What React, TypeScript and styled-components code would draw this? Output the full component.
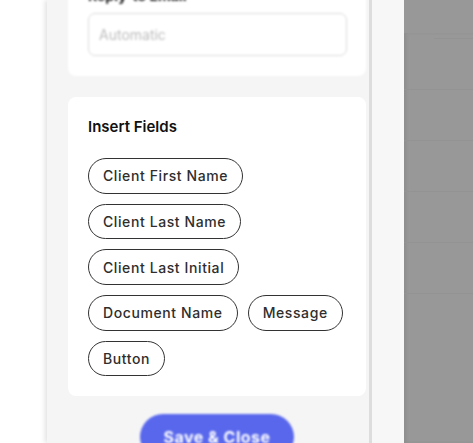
import React, { useLayoutEffect, useRef } from 'react'
import styled, { createGlobalStyle } from 'styled-components'

const GlobalStyle = createGlobalStyle`
  html, body {
    margin: 0;
    padding: 0;
    background: #ffffff;
    font-family: Inter, "Liberation Sans", sans-serif;
  }
  * { box-sizing: border-box; }
`

const fields = [
  ['Client First Name'],
  ['Client Last Name'],
  ['Client Last Initial'],
  ['Document Name', 'Message'],
  ['Button'],
]

const App: React.FC = () => {
  const drawerRef = useRef<HTMLDivElement>(null)

  useLayoutEffect(() => {
    if (drawerRef.current) drawerRef.current.scrollTop = 54
  }, [])

  return (
    <>
      <GlobalStyle />
      <Page>
        <Drawer ref={drawerRef}>
          <Card $blurred>
            <Label>Reply-to Email</Label>
            <Input placeholder="Automatic" readOnly />
          </Card>
          <Card>
            <Title>Insert Fields</Title>
            <PillList>
              {fields.map((row, i) => (
                <PillRow key={i}>
                  {row.map(name => (
                    <Pill key={name}>{name}</Pill>
                  ))}
                </PillRow>
              ))}
            </PillList>
          </Card>
          <Footer>
            <SaveButton>Save &amp; Close</SaveButton>
          </Footer>
        </Drawer>
        <Gutter />
        <Overlay>
          <OverlayTop />
          <OverlayBody>
            {[0, 1, 2, 3, 4, 5].map(i => (
              <OverlayRow key={i} $first={i === 0} />
            ))}
          </OverlayBody>
        </Overlay>
      </Page>
    </>
  )
}

const Page = styled.div`
  display: flex;
  height: 100vh;
  padding-left: 47px;
  overflow: hidden;
`
const Drawer = styled.div`
  width: 325px;
  flex-shrink: 0;
  height: 100%;
  overflow: hidden;
  background: #f5f5f5;
  padding: 21px 3px 40px 21px;
  display: flex;
  flex-direction: column;
  gap: 21px;
  box-shadow: -2px 0 5px rgba(0, 0, 0, 0.12);
  border-right: 3px solid #dddddd;
`
const Card = styled.div<{ $blurred?: boolean }>`
  flex-shrink: 0;
  width: 298px;
  background: #ffffff;
  border-radius: 8px;
  padding: 20px 19px 20px 20px;
  filter: ${p => (p.$blurred ? 'blur(1px)' : 'none')};
`
const Label = styled.div`
  font-size: 14px;
  line-height: 18px;
  font-weight: 700;
  color: #222;
  margin-bottom: 8px;
`
const Input = styled.input`
  display: block;
  width: 100%;
  height: 43px;
  border: 1px solid #dcdcdc;
  border-radius: 7px;
  padding: 0 10px;
  font-family: inherit;
  font-size: 14px;
  color: #333;
  outline: none;
  &::placeholder { color: #bdbdbd; }
`
const Title = styled.div`
  font-size: 15px;
  line-height: 20px;
  font-weight: 600;
  color: #111;
  margin-bottom: 21px;
`
const PillList = styled.div`
  display: flex;
  flex-direction: column;
  gap: 10px;
`
const PillRow = styled.div`
  display: flex;
  gap: 10px;
`
const Pill = styled.button`
  height: 35.7px;
  padding: 0 14px;
  border: 1px solid #333;
  border-radius: 18px;
  background: #fff;
  font-family: inherit;
  font-size: 14px;
  font-weight: 500;
  letter-spacing: 0.6px;
  color: #2e2e2e;
  cursor: pointer;
`
const Footer = styled.div`
  width: 298px;
  display: flex;
  justify-content: center;
  margin-top: -3px;
  flex-shrink: 0;
`
const SaveButton = styled.button`
  width: 154px;
  height: 46px;
  border: none;
  border-radius: 23px;
  background: #5867ec;
  color: #ffffff;
  font-family: inherit;
  font-size: 16px;
  font-weight: 700;
  letter-spacing: 0.5px;
  filter: blur(1.2px);
`
const Gutter = styled.div`
  width: 32px;
  flex-shrink: 0;
  background: #f7f7f7;
`
const Overlay = styled.div`
  flex: 1;
  display: flex;
  flex-direction: column;
  background: #989898;
`
const OverlayTop = styled.div`
  height: 33px;
  flex-shrink: 0;
`
const OverlayBody = styled.div`
  flex: 1;
  box-shadow: inset 3px 0 3px rgba(0, 0, 0, 0.06);
`
const OverlayRow = styled.div<{ $first?: boolean }>`
  height: ${p => (p.$first ? '6px' : '51px')};
  border-bottom: 1px solid #939393;
  margin-left: ${p => (p.$first ? '30px' : '0')};
`

export default App
